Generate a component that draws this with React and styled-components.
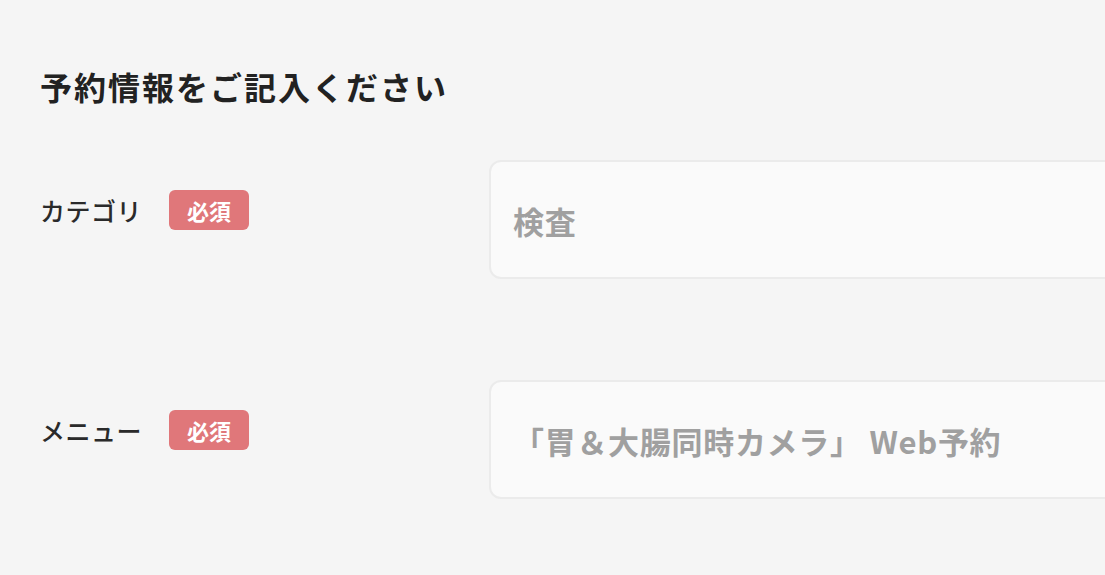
import styled, { createGlobalStyle } from "styled-components"

const GlobalStyle = createGlobalStyle`
    html, body {
        margin: 0;
        padding: 0;
        background-color: #f5f5f5;
        overflow: hidden;
    }
    body {
        font-family: "Noto Sans CJK JP", "Noto Sans", sans-serif;
        color: #222222;
    }
`

const Page = styled.div`
    padding: 62px 0 0 40px;
    width: 1300px;
`

const Title = styled.h2`
    margin: 0 0 50px 0;
    font-size: 32px;
    line-height: 48px;
    font-weight: 700;
    letter-spacing: 2px;
    color: #222222;
`

const Form = styled.div`
    display: flex;
    flex-direction: column;
    gap: 101px;
`

const Row = styled.div`
    display: grid;
    grid-template-columns: 449px 1fr;
    align-items: start;
`

const LabelBox = styled.div`
    display: flex;
    flex-direction: row;
    align-items: center;
    gap: 27px;
    padding-top: 30px;
`

const Label = styled.span`
    font-size: 25px;
    font-weight: 500;
    color: #2a2a2a;
    letter-spacing: 0.5px;
`

const Required = styled.span`
    display: inline-flex;
    align-items: center;
    justify-content: center;
    width: 80px;
    height: 40px;
    border-radius: 6px;
    background-color: #e0777a;
    color: #ffffff;
    font-size: 22px;
    font-weight: 700;
`

const Field = styled.div`
    display: flex;
    align-items: center;
    height: 119px;
    box-sizing: border-box;
    padding: 2px 22px 0 22px;
    background-color: #fafafa;
    border: 2px solid #ebebeb;
    border-radius: 12px;
    font-size: 31px;
    font-weight: 700;
    color: #a0a0a0;
    letter-spacing: 0.7px;
`

const fields = [
    { label: "カテゴリ", value: "検査" },
    { label: "メニュー", value: "「胃＆大腸同時カメラ」 Web予約" },
]

const App = () => {
    return <>
        <GlobalStyle/>
        <Page>
            <Title>予約情報をご記入ください</Title>
            <Form>
                {fields.map((f) => (
                    <Row key={f.label}>
                        <LabelBox>
                            <Label>{f.label}</Label>
                            <Required>必須</Required>
                        </LabelBox>
                        <Field>{f.value}</Field>
                    </Row>
                ))}
            </Form>
        </Page>
    </>
}

export default App
